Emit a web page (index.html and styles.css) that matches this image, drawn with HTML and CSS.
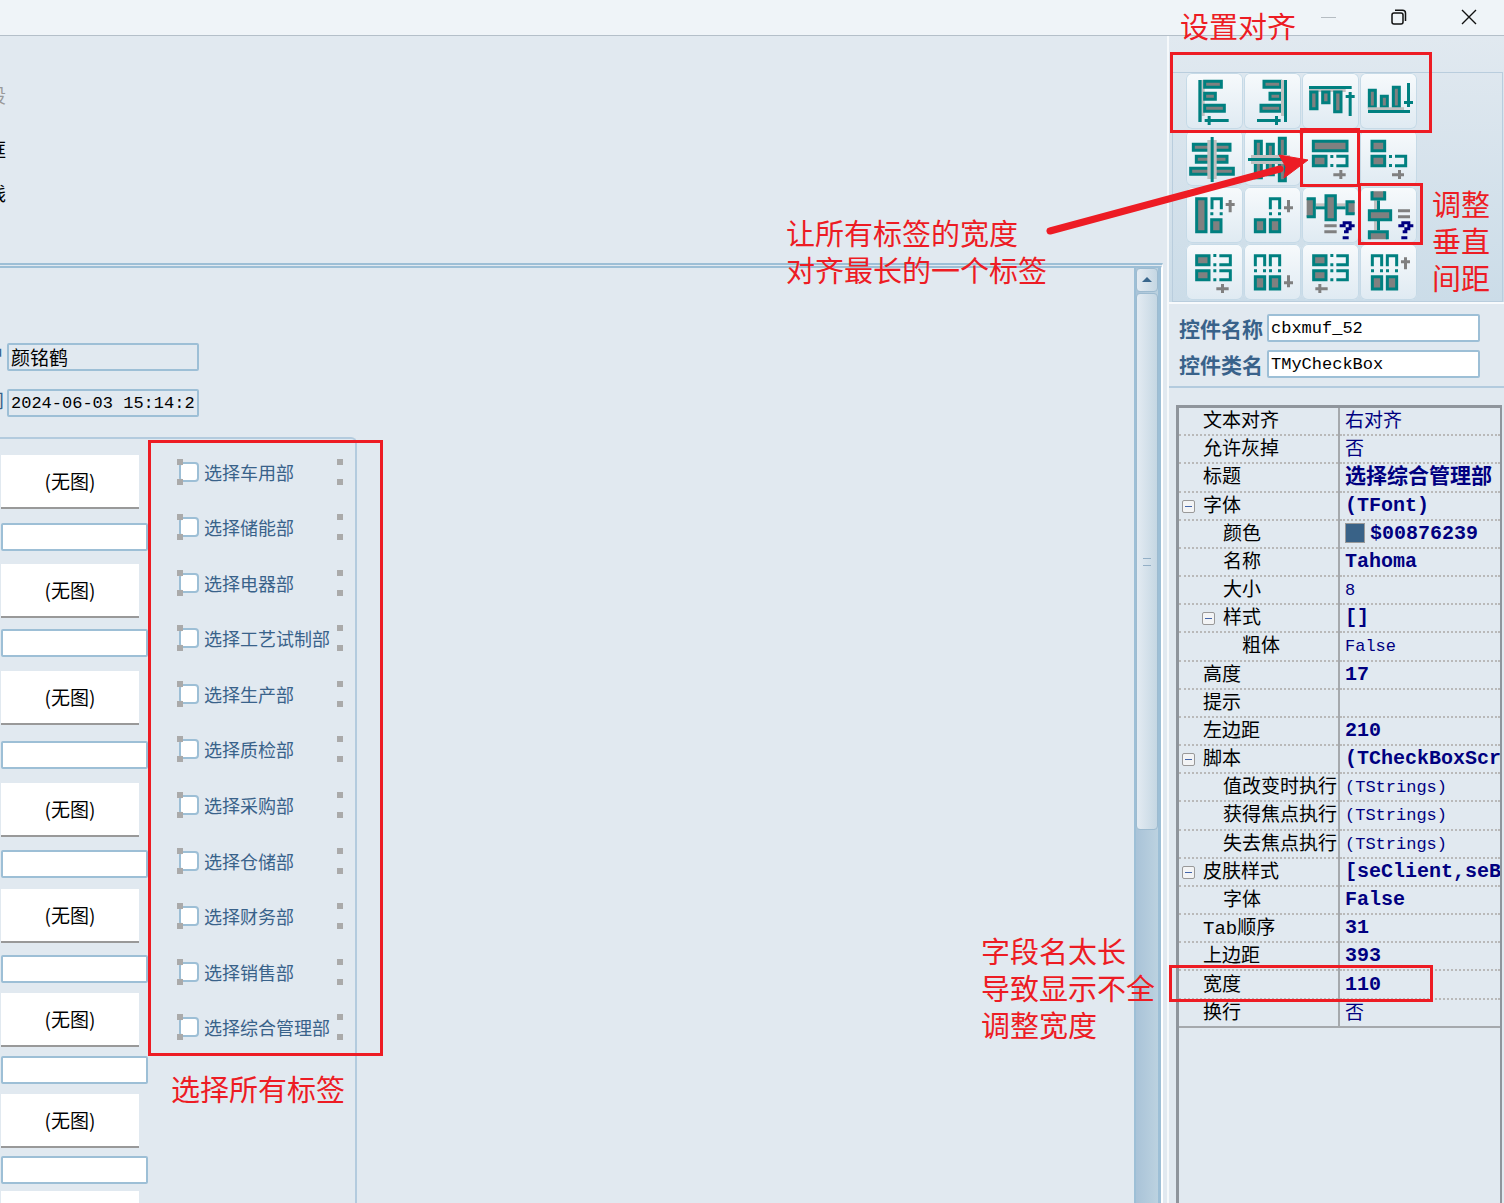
FILE: index.html
```html
<!DOCTYPE html>
<html lang="zh-CN">
<head>
<meta charset="utf-8">
<title>表单设计器</title>
<link rel="stylesheet" href="styles.css">
</head>
<body>
<header class="titlebar">
  <button class="win-btn" aria-label="最小化"><svg width="16" height="16"><path d="M0 8.500h15" stroke="#b5bcc2"/></svg></button>
  <button class="win-btn" aria-label="还原"><svg width="16" height="16" fill="none" stroke="#111" stroke-width="1.500"><rect x="1" y="4" width="11" height="11" rx="2"/><path d="M4 1.200h7.500a3 3 0 0 1 3 3V12"/></svg></button>
  <button class="win-btn" aria-label="关闭"><svg width="16" height="16" stroke="#111" stroke-width="1.400"><path d="M1 1l14 14M15 1L1 15"/></svg></button>
</header>

<main class="workspace">
  <section class="designer">
    <div class="palette">
      <span class="tool muted">字段</span>
      <span class="tool">边框</span>
      <span class="tool">直线</span>
    </div>
    <div class="canvas">
      <div class="form">
        <div class="field"><label for="user">户</label><input id="user" value="颜铭鹤"></div>
        <div class="field"><label for="time">间</label><input id="time" class="mono" value="2024-06-03 15:14:22"></div>
        <div class="group">
          <div class="images">
            <button class="image">(无图)</button><input aria-label="图1">
            <button class="image">(无图)</button><input aria-label="图2">
            <button class="image">(无图)</button><input aria-label="图3">
            <button class="image">(无图)</button><input aria-label="图4">
            <button class="image">(无图)</button><input aria-label="图5">
            <button class="image">(无图)</button><input aria-label="图6">
            <button class="image">(无图)</button><input aria-label="图7">
            <button class="image" aria-label="图8"></button>
          </div>
          <div class="checks">
            <label class="check"><input type="checkbox">选择车用部</label>
            <label class="check"><input type="checkbox">选择储能部</label>
            <label class="check"><input type="checkbox">选择电器部</label>
            <label class="check"><input type="checkbox">选择工艺试制部</label>
            <label class="check"><input type="checkbox">选择生产部</label>
            <label class="check"><input type="checkbox">选择质检部</label>
            <label class="check"><input type="checkbox">选择采购部</label>
            <label class="check"><input type="checkbox">选择仓储部</label>
            <label class="check"><input type="checkbox">选择财务部</label>
            <label class="check"><input type="checkbox">选择销售部</label>
            <label class="check"><input type="checkbox">选择综合管理部</label>
          </div>
        </div>
        <div class="mark mark-labels"></div>
        <p class="note note-labels">选择所有标签</p>
      </div>
      <div class="scrollbar">
        <button class="scroll-up" aria-label="向上滚动"><svg width="10" height="6"><path d="M5 0l5 5H0z" fill="#39668c"/></svg></button>
        <div class="thumb"></div>
      </div>
    </div>
  </section>

  <aside class="inspector">
    <div class="toolbar">
      <div class="tools">
        <button aria-label="左对齐"><svg viewBox="66 99 171 168"><path class="l" d="M113 120h9v108h-9z"/><path class="t" d="M103 120h10v126h-10zM122 237h72v9h-72zM131 228h9v27h-9z"/><g class="b"><path d="M122 124h50v18h-50zM122 160h32v18h-32zM122 196h59v18h-59z"/></g></svg></button>
        <button aria-label="右对齐"><svg viewBox="240 99 171 168"><g class="b"><path d="M300 124h50v18h-50zM318 160h32v18h-32zM291 196h59v18h-59z"/></g><path class="l" d="M351 120h9v108h-9z"/><path class="t" d="M360 120h9v126h-9zM279 237h71v9h-71zM333 228h9v27h-9z"/></svg></button>
        <button aria-label="顶端对齐"><svg viewBox="414 99 171 168"><path class="l" d="M435 147h110v9H435z"/><path class="t" d="M435 138h128v9H435zM554 156h9v72h-9zM545 165h27v9h-27z"/><g class="b"><path d="M440 156h19v50h-19zM476 156h19v32h-19zM512 156h19v59h-19z"/></g></svg></button>
        <button aria-label="底端对齐"><svg viewBox="588 99 171 168"><g class="b"><path d="M616 151h18v50h-18zM652 169h18v32h-18zM688 142h18v59h-18z"/></g><path class="l" d="M612 202h108v8H612z"/><path class="t" d="M612 210h126v9H612zM729 129h9v72h-9zM720 183h27v9h-27z"/></svg></button>

        <button aria-label="水平居中"><svg viewBox="66 270 171 168"><g class="b"><path d="M88 313h110v18H88zM97 349h92v18H97zM80 385h128v18H80z"/></g><path class="l" d="M130 300h28v117h-28z"/><path class="t" d="M140 291h9v135h-9z"/></svg></button>
        <button aria-label="垂直居中"><svg viewBox="240 270 171 168"><g class="b"><path d="M274 304h18v109h-18zM310 313h18v91h-18zM346 295h18v127h-18z"/></g><path class="l" d="M261 345h117v27H261z"/><path class="t" d="M252 354h126v9H252z"/></svg></button>
        <button aria-label="宽度取最大"><svg viewBox="414 270 171 168"><g class="b"><path d="M448 304h101v28H448zM448 349h38v28h-38z"/></g><path class="t" d="M499 345h9v9h-9zM499 372h9v9h-9z"/><path class="o" d="M517 349h32v28h-32"/><path class="g" d="M508 400h37v9h-37zM526 390h9v27h-9z"/></svg></button>
        <button aria-label="宽度取最小"><svg viewBox="588 270 171 168"><g class="b"><path d="M624 304h38v28h-38zM624 349h38v28h-38z"/></g><path class="t" d="M675 345h9v9h-9zM675 372h9v9h-9z"/><path class="o" d="M693 349h32v28h-32"/><path class="g" d="M684 400h36v9h-36zM702 390h9v27h-9z"/></svg></button>

        <button aria-label="高度取最大"><svg viewBox="66 21 171 168"><g class="b"><path d="M98 56h28v99H98zM143 119h28v36h-28z"/></g><path class="t" d="M139 97h9v9h-9zM167 97h9v9h-9z"/><path class="o" d="M144 88V56h28v32"/><path class="g" d="M194 60h9v37h-9zM185 69h27v9h-27z"/></svg></button>
        <button aria-label="高度取最小"><svg viewBox="240 21 171 168"><g class="b"><path d="M274 119h28v36h-28zM319 119h28v36h-28z"/></g><path class="t" d="M315 97h9v9h-9zM342 97h9v9h-9z"/><path class="o" d="M319 88V56h28v32"/><path class="g" d="M369 60h9v37h-9zM360 79h27v9h-27z"/></svg></button>
        <button aria-label="水平间距"><svg viewBox="414 21 171 168"><path class="l" d="M455 70h90v9h-90z"/><path class="t" d="M455 79h90v9h-90z"/><path class="g" d="M428 56h24v54h-24zM549 65h23v36h-23zM481 133h37v9h-37zM481 151h37v9h-37z"/><path class="o" d="M428 56h23v54h-23M572 65h-23v36h23"/><g class="b"><path d="M486 47h28v72h-28z"/></g><path class="q" d="M536 124h27v9h-27zM527 133h18v9h-18zM554 133h18v9h-18zM545 142h18v9h-18zM540 151h14v9h-14zM536 169h18v9h-18z"/></svg></button>
        <button aria-label="垂直间距"><svg viewBox="588 21 171 168"><path class="l" d="M630 61h9v90h-9z"/><path class="t" d="M639 61h9v90h-9z"/><path class="g" d="M624 34h38v23h-38zM616 155h54v23h-54zM702 88h36v9h-36zM702 106h36v9h-36z"/><path class="o" d="M624 34v23h38V34M616 178v-23h54v23"/><g class="b"><path d="M616 92h64v27h-64z"/></g><path class="q" d="M712 124h27v9h-27zM703 133h18v9h-18zM730 133h18v9h-18zM721 142h18v9h-18zM716 151h14v9h-14zM712 169h18v9h-18z"/></svg></button>

        <button aria-label="宽度向右"><svg viewBox="66 192 171 168"><g class="b"><path d="M98 227h37v27H98zM98 272h37v27H98z"/></g><path class="t" d="M148 222h9v9h-9zM148 250h9v9h-9zM148 268h9v9h-9zM148 295h9v9h-9z"/><path class="o" d="M166 227h33v27h-33M166 272h33v27h-33"/><path class="g" d="M157 322h37v9h-37zM171 312h9v27h-9z"/></svg></button>
        <button aria-label="高度向下"><svg viewBox="240 192 171 168"><g class="b"><path d="M274 290h28v37h-28zM319 290h28v37h-28z"/></g><path class="t" d="M270 268h9v9h-9zM297 268h9v9h-9zM315 268h9v9h-9zM342 268h9v9h-9z"/><path class="o" d="M274 259v-32h28v32M319 259v-32h28v32"/><path class="g" d="M369 286h9v36h-9zM360 304h27v9h-27z"/></svg></button>
        <button aria-label="宽度向左"><svg viewBox="414 192 171 168"><g class="b"><path d="M449 227h37v27h-37zM449 272h37v27h-37z"/></g><path class="t" d="M499 222h9v9h-9zM499 250h9v9h-9zM499 268h9v9h-9zM499 295h9v9h-9z"/><path class="o" d="M517 227h33v27h-33M517 272h33v27h-33"/><path class="g" d="M454 322h37v9h-37zM463 312h9v27h-9z"/></svg></button>
        <button aria-label="高度向上"><svg viewBox="588 192 171 168"><g class="b"><path d="M625 290h28v37h-28zM670 290h28v37h-28z"/></g><path class="t" d="M621 268h9v9h-9zM648 268h9v9h-9zM666 268h9v9h-9zM693 268h9v9h-9z"/><path class="o" d="M625 259v-32h28v32M670 259v-32h28v32"/><path class="g" d="M720 232h9v36h-9zM711 241h27v9h-27z"/></svg></button>
      </div>
    </div>

    <div class="identity">
      <label for="cname">控件名称</label><input id="cname" class="mono" value="cbxmuf_52">
      <label for="cclass">控件类名</label><input id="cclass" class="mono" value="TMyCheckBox">
    </div>

    <div class="props">
      <table>
        <tr><th>文本对齐</th><td>右对齐</td></tr>
        <tr><th>允许灰掉</th><td>否</td></tr>
        <tr><th>标题</th><td class="set cjk">选择综合管理部</td></tr>
        <tr><th><button class="toggle" aria-label="折叠"></button>字体</th><td class="set">(TFont)</td></tr>
        <tr><th class="sub">颜色</th><td class="set"><i class="swatch"></i>$00876239</td></tr>
        <tr><th class="sub">名称</th><td class="set">Tahoma</td></tr>
        <tr><th class="sub">大小</th><td class="plain">8</td></tr>
        <tr><th class="sub"><button class="toggle" aria-label="折叠"></button>样式</th><td class="set">[]</td></tr>
        <tr><th class="subsub">粗体</th><td class="plain">False</td></tr>
        <tr><th>高度</th><td class="set">17</td></tr>
        <tr><th>提示</th><td></td></tr>
        <tr><th>左边距</th><td class="set">210</td></tr>
        <tr><th><button class="toggle" aria-label="折叠"></button>脚本</th><td class="set">(TCheckBoxScript)</td></tr>
        <tr><th class="sub">值改变时执行</th><td class="plain">(TStrings)</td></tr>
        <tr><th class="sub">获得焦点执行</th><td class="plain">(TStrings)</td></tr>
        <tr><th class="sub">失去焦点执行</th><td class="plain">(TStrings)</td></tr>
        <tr><th><button class="toggle" aria-label="折叠"></button>皮肤样式</th><td class="set">[seClient,seBorder]</td></tr>
        <tr><th class="sub">字体</th><td class="set">False</td></tr>
        <tr><th>Tab顺序</th><td class="set">31</td></tr>
        <tr><th>上边距</th><td class="set">393</td></tr>
        <tr><th>宽度</th><td class="set">110</td></tr>
        <tr><th>换行</th><td>否</td></tr>
      </table>
    </div>

    <div class="mark mark-align"></div>
    <div class="mark mark-width"></div>
    <div class="mark mark-space"></div>
    <div class="mark mark-prop"></div>
    <svg class="arrow" width="270" height="90"><path d="M10 81L240 19" stroke="#ed1c24" stroke-width="7" stroke-linecap="round"/><path d="M268 10L239 5L246 17L244 28z" fill="#ed1c24" stroke="#ed1c24"/></svg>
    <p class="note note-align">设置对齐</p>
    <p class="note note-width">让所有标签的宽度<br>对齐最长的一个标签</p>
    <p class="note note-space">调整<br>垂直<br>间距</p>
    <p class="note note-prop">字段名太长<br>导致显示不全<br>调整宽度</p>
  </aside>
</main>
</body>
</html>
```
FILE: styles.css
```css
:root {
  --bg: #e1e9f0;
  --line: #9dbfd6;
  --soft: #b3cbde;
  --blue: #39628a;
  --navy: #000080;
  --red: #ed1c24;
  --cjk: "Noto Sans CJK SC", sans-serif;
}

* { box-sizing: border-box; }

body {
  margin: 0;
  height: 100vh;
  display: flex;
  flex-direction: column;
  overflow: hidden;
  background: var(--bg);
  color: #000;
  font: 19px/24px "Liberation Mono", "Noto Sans CJK SC", monospace;
}

button, input { font: inherit; color: inherit; }
button { padding: 0; border: 0; background: none; }

input {
  height: 28px;
  padding: 0 2px;
  border: 2px solid var(--line);
  border-radius: 2px;
  background: #fff;
}

input.mono { font-size: 17px; }

/* Title bar */
.titlebar {
  flex: none;
  height: 36px;
  padding-bottom: 2px;
  display: flex;
  justify-content: flex-end;
  border-bottom: 1px solid #b4bfc9;
  background: #eff4f8;
}
.win-btn {
  width: 70px;
  display: flex;
  align-items: center;
  justify-content: center;
}

.workspace {
  flex: 1;
  min-height: 0;
  display: grid;
  grid-template-columns: minmax(0, 1fr) 337px;
}

/* Design surface */
.designer {
  min-width: 0;
  min-height: 0;
  display: flex;
  flex-direction: column;
  padding-right: 4px;
}
.palette {
  flex: none;
  height: 227px;
  padding-top: 50px;
  display: flex;
  flex-direction: column;
}
.tool {
  width: 6px;
  height: 24px;
  margin-bottom: 24px;
  display: flex;
  justify-content: flex-end;
  overflow: hidden;
  white-space: nowrap;
}
.tool + .tool { margin: 6px 0 14px; }
.muted { color: #999; }

.canvas {
  flex: 1;
  min-height: 0;
  display: flex;
  border-top: 5px double var(--line);
  border-right: 2px solid #fff;
}
.form {
  position: relative;
  flex: 1;
  min-width: 0;
  padding-top: 75px;
  display: flex;
  flex-direction: column;
}
.field {
  flex: none;
  display: flex;
  gap: 3px;
  margin-bottom: 18px;
}
.field label {
  width: 4px;
  display: flex;
  justify-content: flex-end;
  overflow: hidden;
  color: var(--blue);
  line-height: 28px;
}
.field input {
  width: 192px;
  background: var(--bg);
}

.group {
  flex: 1;
  min-height: 0;
  width: 357px;
  margin-top: 2px;
  display: flex;
  gap: 29px;
  overflow: hidden;
  border: 2px solid var(--soft);
  border-width: 2px 2px 0 0;
  border-radius: 0 6px 0 0;
}
.images {
  width: 148px;
  padding: 16px 0 0 1px;
  display: grid;
  grid-template-rows: 68px 41px 65px 42px 70px 42px 67px 39px 66px 38px 63px 38px 62px 35px 54px;
  align-items: start;
}
.images input { width: 147px; }
.image {
  width: 138px;
  height: 54px;
  border-bottom: 2px solid #999;
  background: #fff;
  font-family: var(--cjk);
}
.checks {
  flex: none;
  width: 166px;
  height: 611px;
  margin-top: 5px;
  display: grid;
  grid-auto-rows: 1fr;
  align-items: center;
}
.check {
  position: relative;
  height: 26px;
  display: flex;
  align-items: center;
  gap: 5px;
  padding-left: 2px;
  color: var(--blue);
  font-family: var(--cjk);
  font-size: 18px;
  white-space: nowrap;
}
.check input {
  appearance: none;
  width: 20px;
  height: 20px;
  margin: 0;
  border-radius: 4px;
}
/* Selection handles of a picked control */
.check::after {
  content: "";
  position: absolute;
  inset: 0;
  pointer-events: none;
  background:
    linear-gradient(#aaa, #aaa) 0 0,
    linear-gradient(#aaa, #aaa) 100% 0,
    linear-gradient(#aaa, #aaa) 0 100%,
    linear-gradient(#aaa, #aaa) 100% 100%;
  background-size: 6px 6px;
  background-repeat: no-repeat;
}

.scrollbar {
  width: 27px;
  border: 2px solid var(--line);
  border-width: 0 3px 0 2px;
  background: linear-gradient(90deg, #a9c3d8, #bcd2e0);
}
.scroll-up, .thumb {
  width: 100%;
  display: flex;
  align-items: center;
  justify-content: center;
  border: 1px solid #9dbbd0;
  border-radius: 4px;
  background: linear-gradient(90deg, #e3ebf2, #c5d7e3);
}
.scroll-up { height: 24px; }
.thumb { height: 537px; margin-top: 1px; }
.thumb::before {
  content: "";
  width: 8px;
  height: 6px;
  border: 1px solid #93afc6;
  border-width: 1px 0;
}

/* Inspector */
.inspector {
  position: relative;
  min-height: 0;
  display: flex;
  flex-direction: column;
  border-left: 2px solid #f6f9fb;
}
.toolbar {
  flex: none;
  height: 268px;
  padding: 36px 1px 2px 3px;
  border-bottom: 2px solid #f8fafc;
  background: linear-gradient(#e1e9f0, #cbdce8);
}
.tools {
  padding: 0 0 1px 13px;
  display: grid;
  grid-template-columns: repeat(4, 57px);
  grid-auto-rows: 56px;
  gap: 1px;
  border: 1px solid #b9cddd;
}
.tools button {
  border-radius: 6px;
  background: linear-gradient(#f7fafc, #dfeaf2);
  box-shadow: inset 0 0 0 1px #c6dae7;
}
.tools svg { display: block; width: 57px; height: 56px; }
.t { fill: #008080; }
.l { fill: #c0c0c0; }
.g { fill: #808080; }
.q { fill: #000080; }
.b { fill: #808080; stroke: #008080; stroke-width: 9px; }
.o { fill: none; stroke: #008080; stroke-width: 9px; }

.identity {
  flex: none;
  height: 84px;
  padding: 10px 24px 0 10px;
  display: grid;
  grid-template-columns: 84px 1fr;
  grid-auto-rows: 28px;
  gap: 8px 4px;
  border-bottom: 2px solid var(--soft);
}
.identity label {
  color: var(--blue);
  font: bold 21px/28px var(--cjk);
}
.identity input { min-width: 0; width: 100%; }

.props {
  flex: 1;
  min-height: 0;
  margin: 17px 2px 0 7px;
  overflow: hidden;
  border: 3px solid #8f959c;
  border-width: 3px 2px 0 3px;
}
table {
  width: 100%;
  height: 620px;
  table-layout: fixed;
  border-collapse: collapse;
  border-bottom: 2px solid #a5a9ad;
}
th, td {
  padding: 2px 4px 0 5px;
  border-bottom: 2px dotted #b9b9b9;
  font-weight: normal;
  line-height: 24px;
  text-align: left;
  white-space: nowrap;
  overflow: hidden;
}
th {
  width: 160px;
  padding-left: 24px;
  border-right: 2px solid #a5a9ad;
}
td { color: var(--navy); }
td.set { padding-top: 0; font-size: 20px; font-weight: bold; }
td.cjk { padding-top: 2px; font-size: 21px; }
td.plain { font-size: 17px; }
th.sub { padding-left: 44px; }
th.subsub { padding-left: 63px; }

.toggle {
  width: 13px;
  height: 13px;
  margin: 0 8px 0 -21px;
  vertical-align: 0;
  border: 1px solid #999;
  border-radius: 2px;
  background: linear-gradient(#4466aa, #4466aa) center / 7px 1px no-repeat, #f3f4f5;
}
.swatch {
  display: inline-block;
  width: 20px;
  height: 20px;
  margin-right: 5px;
  vertical-align: -4px;
  border: 1px solid #999;
  background: #396287;
}

/* Tutorial marks laid over the window */
.mark {
  position: absolute;
  border: 3px solid var(--red);
  pointer-events: none;
}
.mark-labels { left: 148px; top: 172px; width: 235px; height: 616px; }
.mark-align { left: 1px; top: 16px; width: 262px; height: 81px; }
.mark-width { left: 131px; top: 92px; width: 60px; height: 59px; }
.mark-space { left: 189px; top: 147px; width: 65px; height: 62px; }
.mark-prop { left: 0; top: 929px; width: 264px; height: 37px; }
.arrow { position: absolute; left: -129px; top: 114px; }

.note {
  position: absolute;
  margin: 0;
  color: var(--red);
  font: 29px/37px var(--cjk);
  white-space: nowrap;
}
.note-labels { left: 171px; top: 802px; }
.note-align { left: 11px; top: -29px; }
.note-width { left: -383px; top: 178px; }
.note-space { left: 263px; top: 149px; }
.note-prop { left: -188px; top: 896px; }
```
